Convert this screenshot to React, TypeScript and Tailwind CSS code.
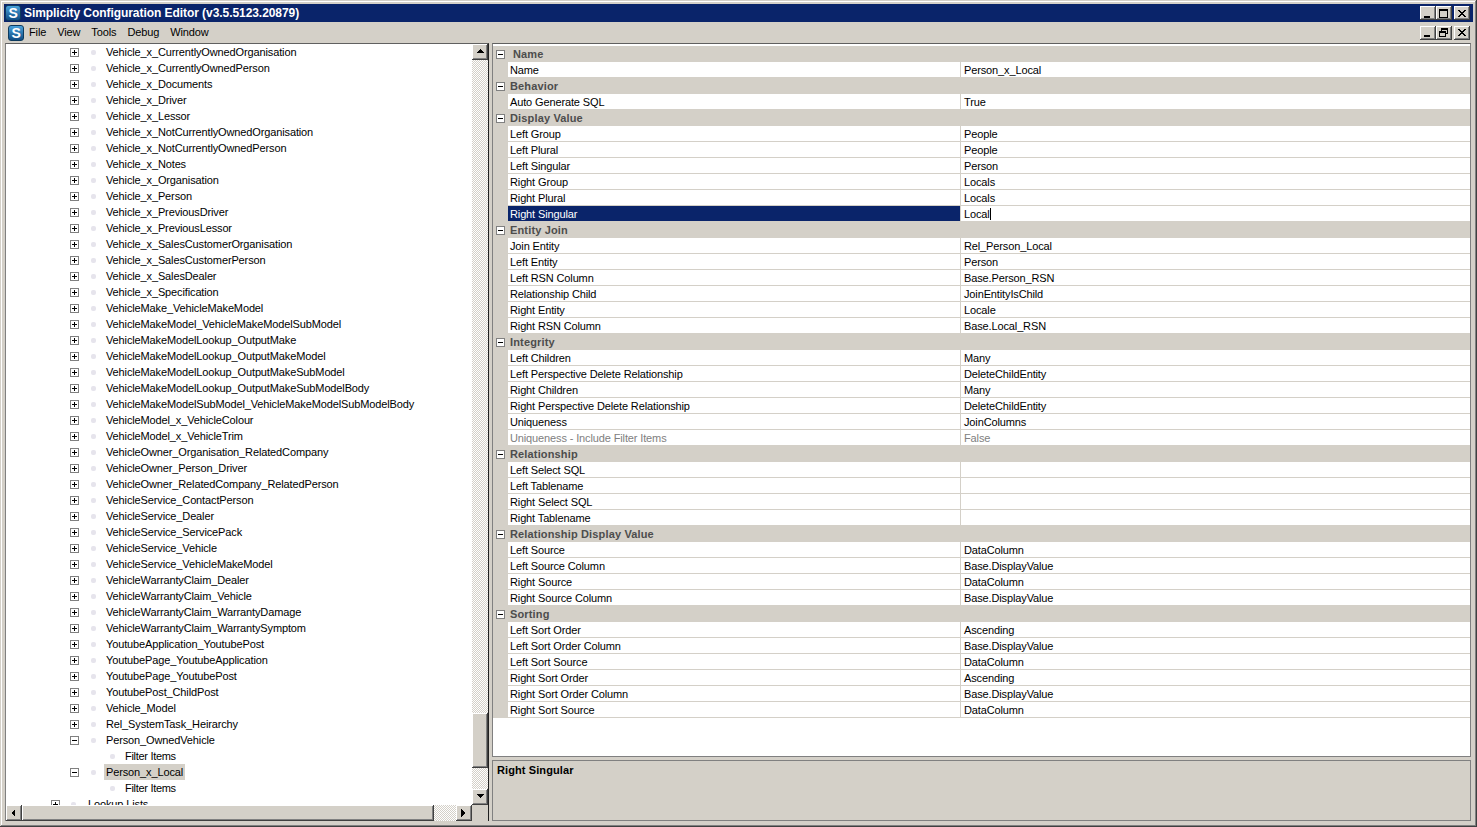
import React from "react"

const treeItems = [
  "Vehicle_x_CurrentlyOwnedOrganisation",
  "Vehicle_x_CurrentlyOwnedPerson",
  "Vehicle_x_Documents",
  "Vehicle_x_Driver",
  "Vehicle_x_Lessor",
  "Vehicle_x_NotCurrentlyOwnedOrganisation",
  "Vehicle_x_NotCurrentlyOwnedPerson",
  "Vehicle_x_Notes",
  "Vehicle_x_Organisation",
  "Vehicle_x_Person",
  "Vehicle_x_PreviousDriver",
  "Vehicle_x_PreviousLessor",
  "Vehicle_x_SalesCustomerOrganisation",
  "Vehicle_x_SalesCustomerPerson",
  "Vehicle_x_SalesDealer",
  "Vehicle_x_Specification",
  "VehicleMake_VehicleMakeModel",
  "VehicleMakeModel_VehicleMakeModelSubModel",
  "VehicleMakeModelLookup_OutputMake",
  "VehicleMakeModelLookup_OutputMakeModel",
  "VehicleMakeModelLookup_OutputMakeSubModel",
  "VehicleMakeModelLookup_OutputMakeSubModelBody",
  "VehicleMakeModelSubModel_VehicleMakeModelSubModelBody",
  "VehicleModel_x_VehicleColour",
  "VehicleModel_x_VehicleTrim",
  "VehicleOwner_Organisation_RelatedCompany",
  "VehicleOwner_Person_Driver",
  "VehicleOwner_RelatedCompany_RelatedPerson",
  "VehicleService_ContactPerson",
  "VehicleService_Dealer",
  "VehicleService_ServicePack",
  "VehicleService_Vehicle",
  "VehicleService_VehicleMakeModel",
  "VehicleWarrantyClaim_Dealer",
  "VehicleWarrantyClaim_Vehicle",
  "VehicleWarrantyClaim_WarrantyDamage",
  "VehicleWarrantyClaim_WarrantySymptom",
  "YoutubeApplication_YoutubePost",
  "YoutubePage_YoutubeApplication",
  "YoutubePage_YoutubePost",
  "YoutubePost_ChildPost",
  "Vehicle_Model",
  "Rel_SystemTask_Heirarchy",
]

const groups: { name: string; rows: [string, string][] }[] = [
  { name: "Name", rows: [["Name", "Person_x_Local"]] },
  { name: "Behavior", rows: [["Auto Generate SQL", "True"]] },
  {
    name: "Display Value",
    rows: [
      ["Left Group", "People"],
      ["Left Plural", "People"],
      ["Left Singular", "Person"],
      ["Right Group", "Locals"],
      ["Right Plural", "Locals"],
      ["Right Singular", "Local"],
    ],
  },
  {
    name: "Entity Join",
    rows: [
      ["Join Entity", "Rel_Person_Local"],
      ["Left Entity", "Person"],
      ["Left RSN Column", "Base.Person_RSN"],
      ["Relationship Child", "JoinEntityIsChild"],
      ["Right Entity", "Locale"],
      ["Right RSN Column", "Base.Local_RSN"],
    ],
  },
  {
    name: "Integrity",
    rows: [
      ["Left Children", "Many"],
      ["Left Perspective Delete Relationship", "DeleteChildEntity"],
      ["Right Children", "Many"],
      ["Right Perspective Delete Relationship", "DeleteChildEntity"],
      ["Uniqueness", "JoinColumns"],
      ["Uniqueness - Include Filter Items", "False"],
    ],
  },
  {
    name: "Relationship",
    rows: [
      ["Left Select SQL", ""],
      ["Left Tablename", ""],
      ["Right Select SQL", ""],
      ["Right Tablename", ""],
    ],
  },
  {
    name: "Relationship Display Value",
    rows: [
      ["Left Source", "DataColumn"],
      ["Left Source Column", "Base.DisplayValue"],
      ["Right Source", "DataColumn"],
      ["Right Source Column", "Base.DisplayValue"],
    ],
  },
  {
    name: "Sorting",
    rows: [
      ["Left Sort Order", "Ascending"],
      ["Left Sort Order Column", "Base.DisplayValue"],
      ["Left Sort Source", "DataColumn"],
      ["Right Sort Order", "Ascending"],
      ["Right Sort Order Column", "Base.DisplayValue"],
      ["Right Sort Source", "DataColumn"],
    ],
  },
]

const raised =
  "bg-[#d4d0c8] shadow-[inset_-1px_-1px_0_#404040,inset_1px_1px_0_#ffffff,inset_-2px_-2px_0_#808080]"
const dither =
  "bg-[repeating-conic-gradient(#d4d0c8_0_25%,#ffffff_0_50%)] bg-[length:2px_2px]"

function Logo() {
  return (
    <div className="w-[16px] h-[16px] shrink-0 rounded-[3px] bg-gradient-to-b from-[#4aa3dc] to-[#0f4d84] border border-[#0c3a5e] flex items-center justify-center text-white font-bold text-[14px] leading-none">
      S
    </div>
  )
}

function ExpandBox({ open }: { open?: boolean }) {
  return (
    <svg width="9" height="9" viewBox="0 0 9 9" className="shrink-0" shapeRendering="crispEdges">
      <rect x="0.5" y="0.5" width="8" height="8" fill="#fff" stroke="#808080" />
      <rect x="2" y="4" width="5" height="1" fill="#000" />
      {!open && <rect x="4" y="2" width="1" height="5" fill="#000" />}
    </svg>
  )
}

function Bullet() {
  return <div className="w-[5px] h-[5px] shrink-0 rounded-[2px] bg-[#e6e4ec]" />
}

function TreeRow({ label, open, selected }: { label: string; open?: boolean; selected?: boolean }) {
  return (
    <div className="h-[16px] flex items-center shrink-0 pl-[64px]">
      <ExpandBox open={open} />
      <div className="ml-[12px]">
        <Bullet />
      </div>
      <span className={`ml-[8px] px-[2px] leading-[16px] whitespace-nowrap ${selected ? "bg-[#d4d0c8]" : ""}`}>
        {label}
      </span>
    </div>
  )
}

function FilterRow() {
  return (
    <div className="h-[16px] flex items-center shrink-0 pl-[104px]">
      <Bullet />
      <span className="ml-[10px] leading-[16px] tracking-[-0.3px]">Filter Items</span>
    </div>
  )
}

function Arrow({ dir }: { dir: "up" | "down" | "left" | "right" }) {
  const pts = {
    up: "4,1 0,5 8,5",
    down: "0,1 8,1 4,5",
    left: "5,0 5,8 1,4",
    right: "1,0 1,8 5,4",
  }[dir]
  return (
    <svg width="8" height="8" viewBox="0 0 8 8" shapeRendering="crispEdges">
      <polygon points={pts} fill="#000" />
    </svg>
  )
}

function ScrollBtn({ dir }: { dir: "up" | "down" | "left" | "right" }) {
  return (
    <div className={`w-[16px] h-[16px] shrink-0 flex items-center justify-center ${raised}`}>
      <Arrow dir={dir} />
    </div>
  )
}

function CaptionBtn({ kind }: { kind: "min" | "max" | "restore" | "close" }) {
  return (
    <div className={`w-[16px] h-[14px] shrink-0 flex items-center justify-center ${raised}`}>
      <svg width="10" height="9" viewBox="0 0 10 9" shapeRendering="crispEdges">
        {kind === "min" && <rect x="1" y="7" width="6" height="2" fill="#000" />}
        {kind === "max" && (
          <path d="M0.5 0.5H8.5V8.5H0.5ZM0.5 1.5H8.5" fill="none" stroke="#000" />
        )}
        {kind === "restore" && (
          <path
            d="M2.5 2.5V0.5H8.5V5.5H6.5M2.5 1.5H8.5M0.5 3.5H6.5V8.5H0.5ZM0.5 4.5H6.5"
            fill="none"
            stroke="#000"
          />
        )}
        {kind === "close" && (
          <path d="M1 1L8 8M2 1L9 8M8 1L1 8M9 1L2 8" fill="none" stroke="#000" shapeRendering="auto" />
        )}
      </svg>
    </div>
  )
}

function GridGroup({ name, rows, first }: { name: string; rows: [string, string][]; first?: boolean }) {
  return (
    <>
      <div className="h-[16px] bg-[#d4d0c8] flex items-center pl-[3px]">
        <ExpandBox open />
        <span className={`font-bold tracking-[0.15px] text-[#4d4d4d] ${first ? "ml-[8px]" : "ml-[5px]"}`}>{name}</span>
      </div>
      {rows.map(([k, v]) => {
        const selected = k === "Right Singular"
        const disabled = k.startsWith("Uniqueness -")
        return (
          <div key={k} className="h-[16px] flex bg-[#d4d0c8]">
            <div className="w-[15px] shrink-0" />
            <div
              className={`w-[453px] shrink-0 pl-[2px] h-[16px] leading-[16px] border-b border-r border-[#d4d0c8] ${
                selected ? "bg-[#0a246a] text-white" : disabled ? "bg-white text-[#808080]" : "bg-white"
              }`}
            >
              {k}
            </div>
            <div
              className={`flex-1 pl-[3px] h-[16px] leading-[16px] bg-white border-b border-[#d4d0c8] ${
                disabled ? "text-[#808080]" : ""
              }`}
            >
              {v}
              {selected && <span className="inline-block w-[1px] h-[12px] bg-black align-[-2px]" />}
            </div>
          </div>
        )
      })}
    </>
  )
}

export default function App() {
  return (
    <div className="w-[1477px] h-[827px] overflow-hidden flex flex-col p-[4px] bg-[#d4d0c8] text-black text-[11px] tracking-[-0.13px] font-['Liberation_Sans',sans-serif] shadow-[inset_-1px_-1px_0_#404040,inset_1px_1px_0_#d4d0c8,inset_-2px_-2px_0_#808080,inset_2px_2px_0_#ffffff]">
      {/* Title bar */}
      <div className="h-[18px] shrink-0 bg-[#0a246a] flex items-center pl-[1px] pr-[3px]">
        <Logo />
        <span className="ml-[3px] text-white text-[12px] font-bold tracking-[-0.06px]">
          Simplicity Configuration Editor (v3.5.5123.20879)
        </span>
        <div className="ml-auto flex">
          <CaptionBtn kind="min" />
          <CaptionBtn kind="max" />
          <div className="w-[2px]" />
          <CaptionBtn kind="close" />
        </div>
      </div>

      {/* Menu bar */}
      <div className="h-[21px] shrink-0 flex items-center pl-[4px] pr-[3px]">
        <Logo />
        <div className="flex ml-[5px] gap-[11px]">
          <span>File</span>
          <span>View</span>
          <span>Tools</span>
          <span>Debug</span>
          <span>Window</span>
        </div>
        <div className="ml-auto flex">
          <CaptionBtn kind="min" />
          <CaptionBtn kind="restore" />
          <div className="w-[2px]" />
          <CaptionBtn kind="close" />
        </div>
      </div>

      <div className="flex-1 min-h-0 flex">
        {/* Tree panel */}
        <div className="w-[484px] shrink-0 ml-[1px] mb-[2px] flex flex-col border-t border-l border-r border-[#808080] border-r-[#202020] border-t-[#606060] bg-white">
          <div className="flex-1 min-h-0 flex">
            <div className="flex-1 min-w-0 overflow-hidden flex flex-col">
              {treeItems.map((t) => (
                <TreeRow key={t} label={t} />
              ))}
              <TreeRow label="Person_OwnedVehicle" open />
              <FilterRow />
              <TreeRow label="Person_x_Local" open selected />
              <FilterRow />
              <div className="h-[16px] flex items-center shrink-0 pl-[45px]">
                <ExpandBox />
                <div className="ml-[11px]">
                  <Bullet />
                </div>
                <span className="ml-[12px]">Lookup Lists</span>
              </div>
            </div>
            <div className="w-[16px] shrink-0 flex flex-col">
              <ScrollBtn dir="up" />
              <div className={`flex-1 flex flex-col ${dither}`}>
                <div className="h-[653px]" />
                <div className={`h-[55px] ${raised}`} />
              </div>
              <ScrollBtn dir="down" />
            </div>
          </div>
          <div className="h-[16px] shrink-0 flex">
            <ScrollBtn dir="left" />
            <div className={`flex-1 flex ${dither}`}>
              <div className={`w-[412px] ${raised}`} />
            </div>
            <ScrollBtn dir="right" />
            <div className="w-[16px] bg-[#d4d0c8]" />
          </div>
        </div>

        {/* Splitter */}
        <div className="w-[3px] shrink-0" />

        {/* Property grid */}
        <div className="w-[979px] shrink-0 flex flex-col mb-[2px]">
          <div className="h-[714px] shrink-0 border border-[#808080] border-t-[#606060] bg-white pt-[2px] flex flex-col overflow-hidden">
            {groups.map((g, i) => (
              <GridGroup key={g.name} name={g.name} rows={g.rows} first={i === 0} />
            ))}
          </div>
          <div className="h-[3px] shrink-0" />
          <div className="flex-1 border border-[#808080] px-[4px] pt-[1px] leading-[16px]">
            <span className="font-bold tracking-[0.1px]">Right Singular</span>
          </div>
        </div>
      </div>
    </div>
  )
}
